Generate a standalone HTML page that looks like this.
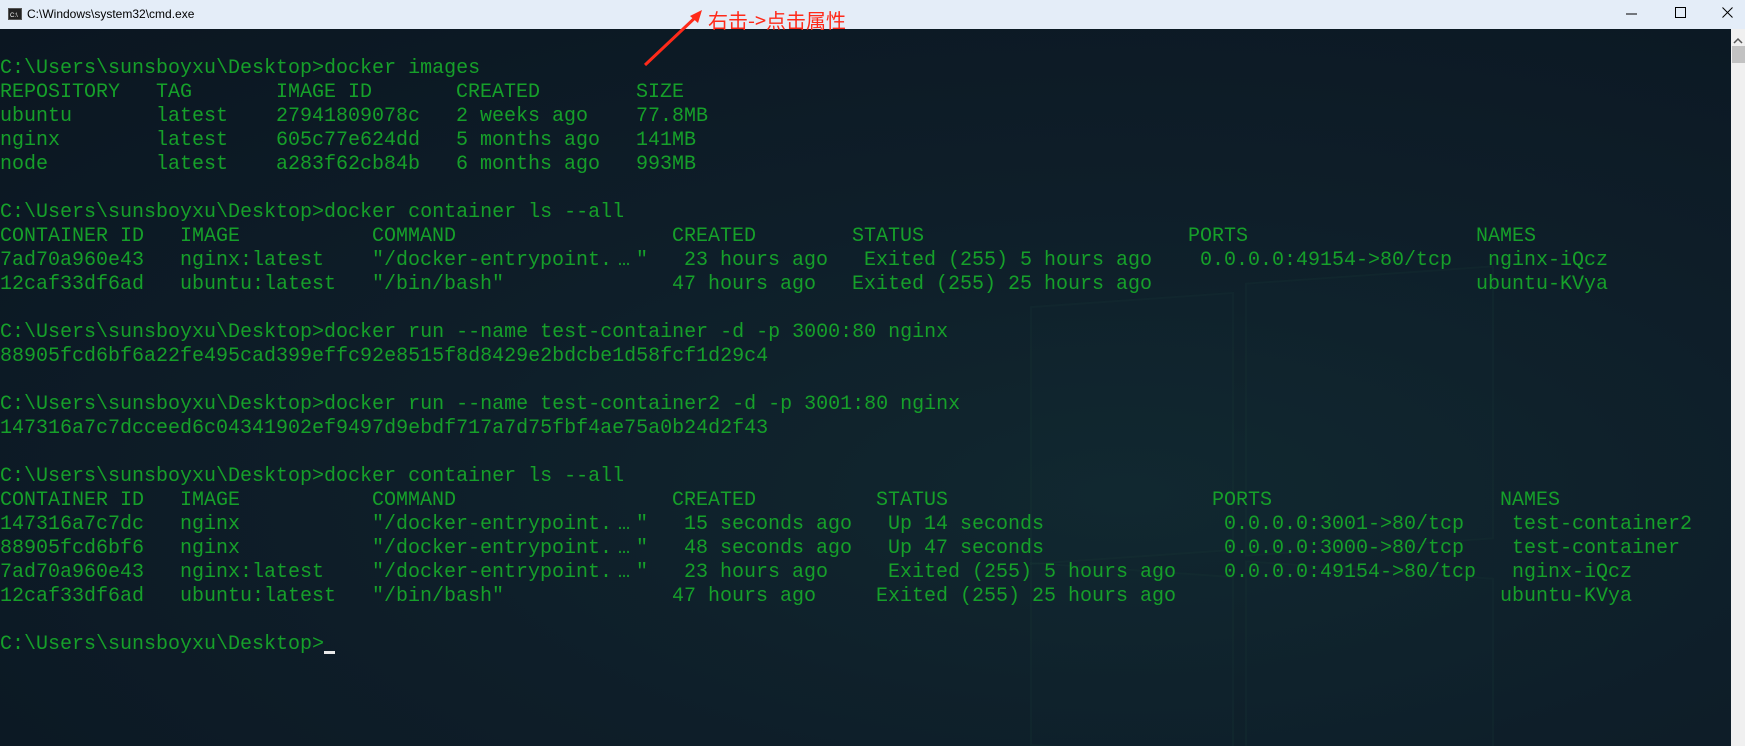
<!DOCTYPE html>
<html><head><meta charset="utf-8"><style>
html,body{margin:0;padding:0;width:1745px;height:746px;overflow:hidden}
body{position:relative;background:#0c1823;font-family:"Liberation Mono","Noto Sans CJK SC",monospace}
#title{position:absolute;left:0;top:0;width:1745px;height:29px;background:#e4edf8}
#title .t{position:absolute;left:27px;top:7px;font:12px "Liberation Sans",sans-serif;color:#000}
#term{position:absolute;left:0;top:29px;width:1731px;height:717px;
 background:radial-gradient(ellipse at 65% 65%,#11272f 0%,#0e1e29 45%,#0b1621 100%)}
.win{position:absolute;border:2px solid rgba(40,90,70,0.09);background:rgba(30,70,70,0.04)}
#scroll{position:absolute;left:1731px;top:29px;width:14px;height:717px;background:#f0f0f0}
.ln{position:absolute;left:0;height:24px;line-height:24px;font-size:20px;color:#16a02a;white-space:pre}
.ln span{position:absolute;top:0}
.ln i{font-style:normal;display:inline-block;width:24px;text-align:center}
</style></head><body>
<div id="title">
 <svg style="position:absolute;left:8px;top:8px" width="14" height="12"><rect x="0.5" y="0.5" width="13" height="11" fill="#222" stroke="#555"/><text x="2" y="9" font-size="6" fill="#fff" font-family="Liberation Sans">C:\</text></svg>
 <div class="t">C:\Windows\system32\cmd.exe</div>
 <svg style="position:absolute;left:1626px;top:8px" width="12" height="12"><line x1="0" y1="6" x2="11" y2="6" stroke="#000"/></svg>
 <svg style="position:absolute;left:1675px;top:7px" width="12" height="12"><rect x="0.5" y="0.5" width="10" height="10" fill="none" stroke="#000"/></svg>
 <svg style="position:absolute;left:1722px;top:7px" width="12" height="12"><path d="M0.5 0.5L10.5 10.5M10.5 0.5L0.5 10.5" stroke="#000"/></svg>
</div>
<div id="term">
 <div class="win" style="left:1030px;top:270px;width:200px;height:255px;transform:skewY(-4deg)"></div>
 <div class="win" style="left:1245px;top:245px;width:245px;height:270px;transform:skewY(-4deg)"></div>
 <div class="win" style="left:1030px;top:540px;width:200px;height:180px;transform:skewY(4deg)"></div>
 <div class="win" style="left:1245px;top:540px;width:245px;height:200px;transform:skewY(4deg)"></div>
</div>
<div id="scroll">
 <svg style="position:absolute;left:2px;top:8px" width="10" height="8"><path d="M1 6L5 2L9 6" stroke="#555" stroke-width="1.5" fill="none"/></svg>
 <div style="position:absolute;left:1px;top:17px;width:13px;height:17px;background:#c2c2c2"></div>
</div>
<div id="txt"></div>
<div style="position:absolute;left:708px;top:8px;font:20px 'Noto Sans CJK SC',sans-serif;color:#ff2a1a;line-height:24px">右击-&gt;点击属性</div>
<svg style="position:absolute;left:0;top:0" width="760" height="80"><path d="M645 65L699 14" stroke="#ff2a1a" stroke-width="3"/><path d="M702 10L690 16L698 23Z" fill="#ff2a1a"/></svg>
<script>
var P="C:\\Users\\sunsboyxu\\Desktop>";
var L=[
[[0,P+"docker images"]],
[[0,"REPOSITORY"],[13,"TAG"],[23,"IMAGE ID"],[38,"CREATED"],[53,"SIZE"]],
[[0,"ubuntu"],[13,"latest"],[23,"27941809078c"],[38,"2 weeks ago"],[53,"77.8MB"]],
[[0,"nginx"],[13,"latest"],[23,"605c77e624dd"],[38,"5 months ago"],[53,"141MB"]],
[[0,"node"],[13,"latest"],[23,"a283f62cb84b"],[38,"6 months ago"],[53,"993MB"]],
[],
[[0,P+"docker container ls --all"]],
[[0,"CONTAINER ID"],[15,"IMAGE"],[31,"COMMAND"],[56,"CREATED"],[71,"STATUS"],[99,"PORTS"],[123,"NAMES"]],
[[0,"7ad70a960e43"],[15,"nginx:latest"],[31,"\"/docker-entrypoint.…\""],[57,"23 hours ago"],[72,"Exited (255) 5 hours ago"],[100,"0.0.0.0:49154->80/tcp"],[124,"nginx-iQcz"]],
[[0,"12caf33df6ad"],[15,"ubuntu:latest"],[31,"\"/bin/bash\""],[56,"47 hours ago"],[71,"Exited (255) 25 hours ago"],[123,"ubuntu-KVya"]],
[],
[[0,P+"docker run --name test-container -d -p 3000:80 nginx"]],
[[0,"88905fcd6bf6a22fe495cad399effc92e8515f8d8429e2bdcbe1d58fcf1d29c4"]],
[],
[[0,P+"docker run --name test-container2 -d -p 3001:80 nginx"]],
[[0,"147316a7c7dcceed6c04341902ef9497d9ebdf717a7d75fbf4ae75a0b24d2f43"]],
[],
[[0,P+"docker container ls --all"]],
[[0,"CONTAINER ID"],[15,"IMAGE"],[31,"COMMAND"],[56,"CREATED"],[73,"STATUS"],[101,"PORTS"],[125,"NAMES"]],
[[0,"147316a7c7dc"],[15,"nginx"],[31,"\"/docker-entrypoint.…\""],[57,"15 seconds ago"],[74,"Up 14 seconds"],[102,"0.0.0.0:3001->80/tcp"],[126,"test-container2"]],
[[0,"88905fcd6bf6"],[15,"nginx"],[31,"\"/docker-entrypoint.…\""],[57,"48 seconds ago"],[74,"Up 47 seconds"],[102,"0.0.0.0:3000->80/tcp"],[126,"test-container"]],
[[0,"7ad70a960e43"],[15,"nginx:latest"],[31,"\"/docker-entrypoint.…\""],[57,"23 hours ago"],[74,"Exited (255) 5 hours ago"],[102,"0.0.0.0:49154->80/tcp"],[126,"nginx-iQcz"]],
[[0,"12caf33df6ad"],[15,"ubuntu:latest"],[31,"\"/bin/bash\""],[56,"47 hours ago"],[73,"Exited (255) 25 hours ago"],[125,"ubuntu-KVya"]],
[],
[[0,P]]
];
var h="";
L.forEach(function(r,i){h+='<div class="ln" style="top:'+(57+24*i)+'px">';
r.forEach(function(c){h+='<span style="left:'+(c[0]*12)+'px">'+c[1].replace(/&/g,"&amp;").replace(/</g,"&lt;").replace(/>/g,"&gt;").replace(/…/g,"<i>…</i>")+'</span>';});
h+='</div>';});
h+='<div style="position:absolute;left:324px;top:'+(57+24*24+18)+'px;width:11px;height:3px;background:#e8e8e8"></div>';
document.getElementById("txt").innerHTML=h;
</script>
</body></html>
